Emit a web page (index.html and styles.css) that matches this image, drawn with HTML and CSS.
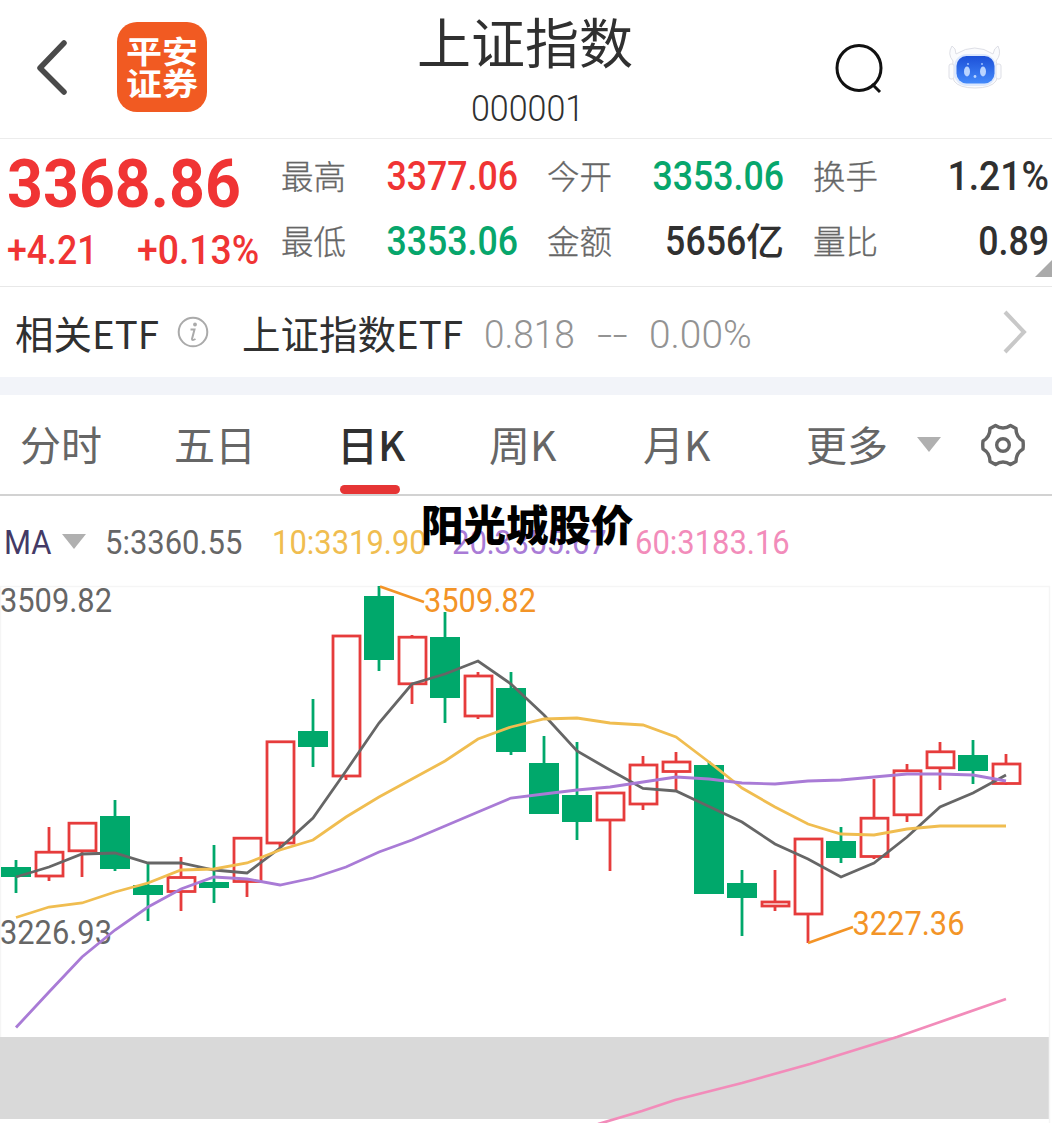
FILE: index.html
```
<!DOCTYPE html>
<html lang="zh-CN">
<head>
  <meta charset="UTF-8" />
  <meta name="viewport" content="width=device-width, initial-scale=1.0" />
  <title>上证指数</title>
  <link rel="stylesheet" href="styles.css">
</head>
<body>
  <main>
    <header class="topbar">
      <svg class="back" viewBox="0 0 36 60"><path d="M30 6 L6 31 L30 55" /></svg>
      <div class="brand"><span>平安</span><span>证券</span></div>
      <div class="title">
        <h1>上证指数</h1>
        <div class="code num">000001</div>
      </div>
      <svg class="search" viewBox="0 0 52 56"><ellipse cx="24" cy="25" rx="22" ry="22.5" /><path d="M37 41 L45 49" /></svg>
      <svg class="robot" viewBox="0 0 60 50">
        <defs>
          <linearGradient id="face" x1="0" y1="0" x2="0" y2="1">
            <stop offset="0" stop-color="#1c50d8" />
            <stop offset="1" stop-color="#4389fa" />
          </linearGradient>
        </defs>
        <path class="shell" d="M6 16 Q0 9 5 1 Q9 3 9 9 Q28 -3 46 9 Q47 3 51 1 Q55 9 49 16 Q53 26 49 36 Q44 43 28 43 Q12 43 7 36 Q4 26 6 16Z" />
        <rect class="ear" x="2" y="19" width="5" height="15" rx="2" />
        <rect class="ear" x="49" y="19" width="5" height="15" rx="2" />
        <rect x="7" y="9" width="42" height="32" rx="13" fill="#dce8fd" />
        <rect x="9.500" y="11" width="38" height="27.500" rx="10" fill="url(#face)" />
        <ellipse cx="20" cy="26.500" rx="3" ry="5" fill="#b9d4ff" />
        <ellipse cx="36" cy="26.500" rx="3" ry="5" fill="#b9d4ff" />
        <circle cx="21" cy="19" r="1" fill="#9cc0ff" />
        <circle cx="35" cy="19" r="1" fill="#9cc0ff" />
        <circle cx="28" cy="31.500" r="1.400" fill="#b9d4ff" />
      </svg>
    </header>

    <section class="quote">
      <div class="last">
        <div class="price num">3368.86</div>
        <div class="change"><span class="num">+4.21</span><span class="num pct">+0.13%</span></div>
      </div>
      <dl class="stats">
        <dt>最高</dt><dd class="up num">3377.06</dd>
        <dt>今开</dt><dd class="down num">3353.06</dd>
        <dt>换手</dt><dd class="num pct">1.21%</dd>
        <dt>最低</dt><dd class="down num">3353.06</dd>
        <dt>金额</dt><dd class="amount"><span class="num">5656</span>亿</dd>
        <dt>量比</dt><dd class="num">0.89</dd>
      </dl>
      <i class="corner"></i>
    </section>

    <section class="etf">
      <span class="etf-label">相关ETF</span>
      <svg class="info" viewBox="0 0 32 32"><circle cx="16" cy="16" r="14.3" /><path d="M13.500 13.500 H17.500 L15 23 Q15 25 18.500 23" /><circle class="dot" cx="18" cy="8.500" r="1.900" /></svg>
      <span class="etf-name">上证指数ETF</span>
      <span class="etf-val"><span class="num v1">0.818</span><span class="num v2">--</span><span class="num v3">0.00%</span></span>
      <svg class="more" viewBox="0 0 28 44"><path d="M3 2 L22 22 L3 42" /></svg>
    </section>

    <nav class="tabs">
      <span>分时</span>
      <span>五日</span>
      <span class="active">日K</span>
      <span>周K</span>
      <span>月K</span>
      <span>更多</span>
      <i class="caret"></i>
      <svg class="gear" viewBox="0 0 46 46">
        <path d="M15.500 3.500 Q23 8.500 30.500 3.500 L36 6.500 Q36 15 43 19 Q43.500 23 43 27 Q36 31 36 39.500 L30.500 42.500 Q23 37.500 15.500 42.500 L10 39.500 Q10 31 3 27 Q2.500 23 3 19 Q10 15 10 6.500 Z" />
        <circle cx="23" cy="23" r="6.300" />
      </svg>
    </nav>

    <div class="legend">
      <span class="num ma">MA</span>
      <i class="caret"></i>
      <span class="num ma5">5:3360.55</span>
      <span class="num ma10">10:3319.90</span>
      <span class="num ma20">20:3355.67</span>
      <span class="num ma60">60:3183.16</span>
      <strong class="caption">阳光城股价</strong>
    </div>

    <svg class="chart" id="chart" viewBox="0 586 1052 537">
      <rect x="0" y="1037" width="1050" height="82" fill="#d9d9d9" />
      <path class="frame" d="M0.500 1037 V586.500 H1049.500 V1123" />
      <g id="axis">
        <text x="0" y="612" textLength="112" lengthAdjust="spacingAndGlyphs">3509.82</text>
        <text x="0" y="944" textLength="112" lengthAdjust="spacingAndGlyphs">3226.93</text>
      </g>
      <g id="candles"></g>
      <g id="lines"></g>
      <g class="peak">
        <path d="M380 586.500 L424 602" />
        <path d="M808 943 L853 927" />
        <text x="424" y="612" textLength="112" lengthAdjust="spacingAndGlyphs">3509.82</text>
        <text x="852.500" y="935" textLength="112" lengthAdjust="spacingAndGlyphs">3227.36</text>
      </g>
    </svg>
  </main>

  <script>
    const step = 33;
    const startX = 16;

    // [up, high, low, body top, body bottom]
    const candles = [
      [0, 860, 893, 867, 877], [1, 827, 881, 850.7, 877.5], [1, 822, 877, 821.7, 852.3],
      [0, 800, 871, 816, 869], [0, 863, 921, 885, 895], [1, 857, 911, 876, 893],
      [0, 845, 903, 882, 888], [1, 837, 897, 836.7, 883], [1, 741, 848, 740.3, 844.5],
      [0, 699, 767, 731, 747], [1, 635, 780, 634.5, 777.5], [0, 586, 671, 596, 660],
      [1, 635, 704, 635.7, 685.3], [0, 612, 723, 637, 698], [1, 672, 719, 674.5, 717.5],
      [0, 672, 755, 688, 752], [0, 736, 814, 763, 814], [0, 742, 840, 795, 822],
      [1, 792, 871, 791.5, 821.5], [1, 756, 810, 763.5, 805.5], [1, 752, 790, 760.5, 773],
      [0, 761, 894, 765, 894], [0, 870, 936, 883, 898], [1, 870, 911, 900.5, 907.5],
      [1, 838, 943, 837.5, 915.5], [0, 827, 863, 841, 858], [1, 779, 859, 816.7, 858],
      [1, 764, 822, 769.3, 816.3], [1, 742, 790, 750.3, 769.3], [0, 740, 784, 755, 771],
      [1, 754, 785, 762.5, 785]
    ];

    const averages = {
      ma5: [877, 867, 854, 853, 863, 863, 870, 873, 848, 818, 771, 723, 684, 674, 661, 684, 715, 751, 770, 788.5, 791, 806.5, 822, 844, 859, 877, 863, 837, 807, 793, 775],
      ma10: [917.5, 907, 903, 892, 883, 870, 869, 863, 850, 840, 817, 797, 779, 761, 739, 727, 719, 718, 723, 725, 737, 762, 788, 807, 824, 834, 835, 829, 826, 826, 826],
      ma20: [1027.5, 992, 957, 930, 907, 889, 877, 879, 885, 878, 867, 852, 840, 826, 812, 798, 794, 790, 787, 782, 777, 779, 783, 784, 781, 780, 777, 774, 774, 775, 781]
    };

    let html = '';
    candles.forEach(([up, high, low, top, bottom], i) => {
      const x = startX + i * step;
      if (up) {
        html += `<path class="up" d="M${x} ${high}V${top + 1}M${x} ${bottom - 1}V${low}" />`;
        html += `<rect class="up" x="${x - 13}" y="${top + 1.5}" width="27" height="${bottom - top - 3}" />`;
      } else {
        html += `<path class="down" d="M${x} ${high}V${low}" />`;
        html += `<rect class="down" x="${x - 15}" y="${top}" width="30" height="${bottom - top}" />`;
      }
    });
    document.getElementById('candles').innerHTML = html;

    html = '<polyline class="ma60" points="598,1124 642,1111 675,1100 742,1083 810,1064 897,1037 940,1022 1006,999" />';
    for (const name in averages) {
      const points = averages[name].map((y, i) => `${startX + i * step},${y}`).join(' ');
      html += `<polyline class="${name}" points="${points}" />`;
    }
    document.getElementById('lines').innerHTML = html;
  </script>
</body>
</html>
```
FILE: styles.css
```
:root {
  --red: #f03434;
  --green: #07a66c;
  --text: #303030;
  --gray: #666;
  --ma5: #666;
  --ma10: #f0bd50;
  --ma20: #a97bd6;
  --ma60: #f28cba;
}

* {
  box-sizing: border-box;
}

body {
  margin: 0;
  background: #fff;
  color: var(--text);
  font-family: Roboto, "Noto Sans CJK SC", sans-serif;
}

main {
  width: 1052px;
  height: 1123px;
  overflow: hidden;
}

/* narrow digits */
.num {
  display: inline-block;
  font-family: Roboto, sans-serif;
  white-space: nowrap;
  transform: scaleX(0.87);
  transform-origin: left center;
}

/* top bar */
.topbar {
  display: grid;
  grid-template-columns: 117px 90px 636px 104px 105px;
  height: 139px;
  border-bottom: 1px solid #ececec;
}

.back {
  width: 36px;
  height: 60px;
  margin: 37px 0 0 34px;
  fill: none;
  stroke: #4a4a4a;
  stroke-width: 5.5;
  stroke-linecap: round;
  stroke-linejoin: round;
}

.brand {
  display: flex;
  flex-direction: column;
  justify-content: center;
  height: 90px;
  margin-top: 22px;
  padding-bottom: 3px;
  border-radius: 20px;
  background: #f15a22;
  color: #fff;
  font: 700 31px/32px "Noto Sans CJK SC", sans-serif;
  text-align: center;
}

.brand span {
  transform: scaleX(1.16);
}

.title {
  text-align: center;
}

h1 {
  margin: 8px 0 0;
  font: 400 54px/66px "Noto Sans CJK SC", sans-serif;
}

.code {
  font-size: 37px;
  font-weight: 300;
  line-height: 69px;
  transform: translateX(3px) scaleX(0.92);
  transform-origin: center;
}

.search {
  width: 52px;
  height: 56px;
  margin: 43px 0 0 -8px;
  fill: none;
  stroke: #111;
  stroke-width: 3;
}

.robot {
  width: 60px;
  height: 50px;
  margin-top: 45px;
  overflow: visible;
}

.shell,
.ear {
  fill: #fafbfd;
  stroke: #dedfe6;
  stroke-width: 1;
}

/* quote */
.quote {
  position: relative;
  display: flex;
  height: 148px;
  border-bottom: 1px solid #e8e8e8;
}

.last {
  width: 282px;
  padding-left: 7px;
  color: var(--red);
}

.price {
  margin-top: 10px;
  font-size: 67px;
  font-weight: 700;
  line-height: 70px;
  transform: scaleX(0.935);
}

.change {
  display: grid;
  grid-template-columns: 130px 1fr;
  font-size: 41px;
  font-weight: 500;
  line-height: 63px;
}

.change .pct {
  transform: scaleX(0.91);
}

.stats {
  display: grid;
  grid-template-columns: 66px 200px 66px 200px 66px 170px;
  grid-auto-rows: 65px;
  margin: 5px 0 0;
  font-size: 41px;
  font-weight: 500;
  line-height: 65px;
}

.stats dt {
  margin-left: -1px;
  color: var(--gray);
  font: 300 32.5px/62px "Noto Sans CJK SC", sans-serif;
  -webkit-text-stroke: 0.3px var(--gray);
}

.stats dd {
  margin: 0 30px 0 0;
  text-align: right;
  transform-origin: right center;
}

.stats dd:nth-of-type(3n) {
  margin-right: 1px;
}

.stats .pct {
  transform: scaleX(0.91);
}

.amount {
  display: flex;
  justify-content: flex-end;
  font-family: "Noto Sans CJK SC", sans-serif;
  font-size: 38px;
  line-height: 59px;
}

.amount .num {
  font-size: 41px;
  line-height: 65px;
  transform-origin: right center;
}

.up {
  color: var(--red);
}

.down {
  color: var(--green);
}

.corner {
  position: absolute;
  right: 0;
  bottom: 9px;
  border-left: 17px solid transparent;
  border-bottom: 17px solid #aaa;
}

/* related etf */
.etf {
  display: grid;
  grid-template-columns: 162px 65px 242px 1fr 50px;
  align-items: center;
  height: 108px;
  padding-left: 15px;
  border-bottom: 18px solid #f2f4f9;
  font: 400 38.5px/88px "Noto Sans CJK SC", sans-serif;
}

.etf-label,
.etf-name {
  margin-top: -3px;
}

.info {
  width: 32px;
  height: 32px;
  margin-top: -2px;
  fill: none;
  stroke: #aaa;
  stroke-width: 2;
}

.info .dot {
  fill: #aaa;
  stroke: none;
}

.etf-val {
  display: grid;
  grid-template-columns: 113px 52px 1fr;
  padding-top: 4px;
  color: #939393;
  font-weight: 300;
}

.etf-val .v1 {
  transform: scaleX(0.96);
}

.etf-val .v2 {
  transform: scaleX(1.4);
}

.etf-val .v3 {
  transform: scaleX(1.01);
}

.more {
  width: 28px;
  height: 44px;
  margin-top: -2px;
  fill: none;
  stroke: #c8c8c8;
  stroke-width: 4;
}

/* period tabs */
.tabs {
  display: grid;
  grid-template-columns: 154px 163px 152px 154px 163px 111px 63px 46px;
  align-items: center;
  height: 101px;
  padding-left: 20px;
  border-bottom: 2px solid #d2d2d2;
  color: var(--gray);
  font: 400 41px/97px "Noto Sans CJK SC", sans-serif;
}

.tabs span {
  height: 99px;
}

.tabs .active {
  position: relative;
  color: var(--text);
  font-weight: 500;
}

.tabs .active::after {
  content: "";
  position: absolute;
  left: 3px;
  bottom: 0;
  width: 60px;
  height: 9px;
  border-radius: 4.5px;
  background: #e63535;
}

.caret {
  width: 0;
  border: 12px solid transparent;
  border-top: 15px solid #b0b0b0;
  border-bottom: 0;
}

.gear {
  width: 46px;
  height: 46px;
  fill: none;
  stroke: #666;
  stroke-width: 3.4;
  stroke-linejoin: round;
}

/* moving averages */
.legend {
  position: relative;
  display: grid;
  grid-template-columns: 58px 43px 167px 180px 183px 1fr;
  align-items: center;
  height: 90px;
  padding-left: 4px;
  font-size: 34px;
}

.legend .num {
  margin-top: 2px;
  transform: scaleX(0.91);
}

.ma {
  color: #443a66;
}

.legend .ma5 { color: var(--ma5); }
.legend .ma10 { color: var(--ma10); }
.legend .ma20 { color: var(--ma20); }
.legend .ma60 { color: var(--ma60); }

.caption {
  position: absolute;
  top: -2px;
  left: 421px;
  color: #000;
  font: 900 42.5px/58px "Noto Sans CJK SC", sans-serif;
}

/* chart */
.chart {
  display: block;
  width: 1052px;
  height: 537px;
  overflow: visible;
  font-size: 33px;
}

.chart text {
  fill: #666;
}

.chart path,
.chart polyline {
  fill: none;
  stroke-width: 2.8;
}

.chart .frame {
  stroke: #f5f5f5;
  stroke-width: 1.5;
}

.chart .up {
  fill: none;
  stroke: #e63c3c;
  stroke-width: 2.8;
}

.chart rect.down {
  fill: #00a86b;
}

.chart path.down {
  stroke: #00a86b;
}

.chart .ma5 { stroke: var(--ma5); }
.chart .ma10 { stroke: var(--ma10); }
.chart .ma20 { stroke: var(--ma20); }
.chart .ma60 { stroke: var(--ma60); }

.chart .peak path {
  stroke: #f39427;
}

.chart .peak text {
  fill: #f39427;
}
```
